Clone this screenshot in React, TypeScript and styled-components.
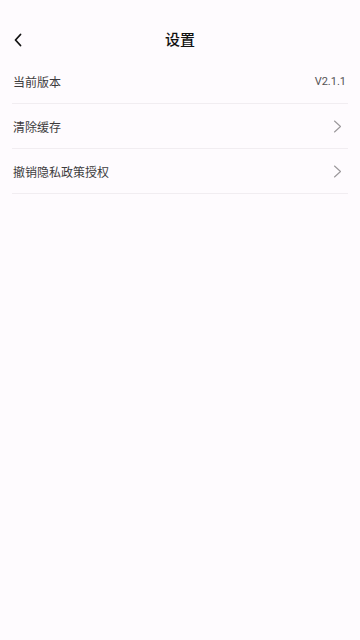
import React from 'react';
import styled, { createGlobalStyle } from 'styled-components';

const GlobalStyle = createGlobalStyle`
  html, body {
    margin: 0;
    padding: 0;
    background: #fefbfe;
  }
  body {
    font-family: "Noto Sans", "Noto Sans CJK SC", sans-serif;
  }
`;

type Item = { label: string; value?: string; arrow?: boolean };

const items: Item[] = [
  { label: '当前版本', value: 'V2.1.1' },
  { label: '清除缓存', arrow: true },
  { label: '撤销隐私政策授权', arrow: true },
];

const BackIcon = () => (
  <svg width="10" height="14" viewBox="0 0 10 14" fill="none">
    <path d="M7.5 1.5L2.5 7l5 5.5" stroke="#111" strokeWidth="1.8" strokeLinecap="round" strokeLinejoin="round" />
  </svg>
);

const ArrowIcon = () => (
  <svg width="9" height="13" viewBox="0 0 9 13" fill="none">
    <path d="M1.5 1L7.5 6.5 1.5 12" stroke="#9a979a" strokeWidth="1.1" strokeLinecap="round" strokeLinejoin="round" />
  </svg>
);

const App = () => {
  return (
    <>
      <GlobalStyle />
      <St.Page>
        <St.Header>
          <St.Back>
            <BackIcon />
          </St.Back>
          <St.Title>设置</St.Title>
          <span />
        </St.Header>
        <St.List>
          {items.map((item) => (
            <St.Row key={item.label}>
              <St.Label>{item.label}</St.Label>
              {item.value && <St.Value>{item.value}</St.Value>}
              {item.arrow && (
                <St.Arrow>
                  <ArrowIcon />
                </St.Arrow>
              )}
            </St.Row>
          ))}
        </St.List>
      </St.Page>
    </>
  );
};

export default App;

const St = {
  Page: styled.div`
    min-height: 640px;
    background: #fefbfe;
  `,
  Header: styled.header`
    display: grid;
    grid-template-columns: 1fr auto 1fr;
    align-items: center;
    height: 39px;
    padding: 20px 12px 0;
  `,
  Back: styled.div`
    display: flex;
    align-items: center;
    padding-left: 1px;
  `,
  Title: styled.h1`
    margin: 0 0 2px;
    font-size: 15px;
    font-weight: 500;
    color: #111;
    line-height: 20px;
  `,
  List: styled.ul`
    list-style: none;
    margin: 0 12px;
    padding: 0;
  `,
  Row: styled.li`
    display: flex;
    align-items: center;
    justify-content: space-between;
    box-sizing: border-box;
    height: 45px;
    padding: 1px 2px 0 1px;
    border-bottom: 1px solid #f1edf1;
  `,
  Label: styled.span`
    font-size: 12px;
    color: #3d3b3d;
  `,
  Value: styled.span`
    font-family: Roboto, "Noto Sans", sans-serif;
    font-size: 11px;
    color: #555355;
  `,
  Arrow: styled.span`
    display: flex;
    margin-right: 4px;
  `,
};
